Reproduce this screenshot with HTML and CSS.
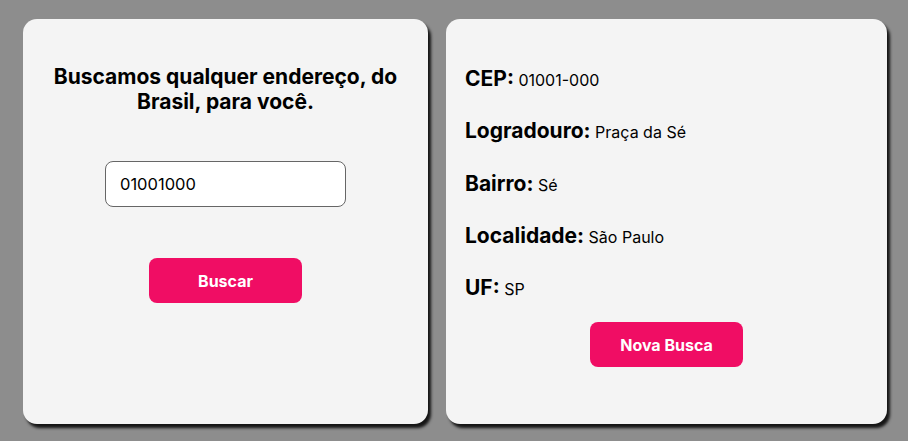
FILE: index.html
```html
<!DOCTYPE html>
<html lang="pt-BR">
<head>
<meta charset="utf-8">
<title>Busca CEP</title>
<link rel="stylesheet" href="styles.css">
</head>
<body>
<main class="page">
  <section class="card card-search">
    <h1 class="title">Buscamos qualquer endereço, do Brasil, para você.</h1>
    <input class="cep-input" type="text" value="01001000">
    <button class="btn btn-search">Buscar</button>
  </section>
  <section class="card card-result">
    <div class="rows">
      <p class="row"><span class="label">CEP:</span> <span class="value">01001-000</span></p>
      <p class="row"><span class="label">Logradouro:</span> <span class="value">Praça da Sé</span></p>
      <p class="row"><span class="label">Bairro:</span> <span class="value">Sé</span></p>
      <p class="row"><span class="label">Localidade:</span> <span class="value">São Paulo</span></p>
      <p class="row"><span class="label">UF:</span> <span class="value">SP</span></p>
    </div>
    <button class="btn btn-new">Nova Busca</button>
  </section>
</main>
</body>
</html>
```
FILE: styles.css
```css
* { box-sizing: border-box; }
html, body { margin: 0; padding: 0; }
body {
  background: #8d8d8d;
  font-family: Inter, "Noto Sans", sans-serif;
  color: #000;
  width: 908px;
  height: 441px;
  overflow: hidden;
}
.page {
  display: flex;
  gap: 18px;
  padding: 19px 21px 0 23px;
}
.card {
  background: #f4f4f4;
  border-radius: 14px;
  height: 405px;
  box-shadow: 3px 4px 3px rgba(0, 0, 0, 0.85);
}
.card-search {
  width: 405px;
  display: flex;
  flex-direction: column;
  align-items: center;
  padding-top: 45px;
}
.title {
  margin: 0;
  font-size: 21px;
  font-weight: 700;
  line-height: 25px;
  text-align: center;
  width: 380px;
}
.cep-input {
  margin-top: 47px;
  width: 241px;
  height: 46px;
  border: 1px solid #666;
  border-radius: 8px;
  background: #fff;
  padding: 0 14px;
  font-family: inherit;
  font-size: 16.5px;
  color: #000;
  outline: none;
}
.btn {
  width: 153px;
  height: 45px;
  border: none;
  border-radius: 8px;
  background: #f00d64;
  color: #fff;
  font-family: inherit;
  font-size: 16px;
  font-weight: 700;
}
.btn-search { margin-top: 51px; }
.card-result {
  flex: 1;
  display: flex;
  flex-direction: column;
  padding: 47px 19px 0;
}
.rows {
  display: flex;
  flex-direction: column;
  gap: 27.3px;
}
.row {
  margin: 0;
  line-height: 25px;
  height: 25px;
}
.label {
  font-size: 21px;
  font-weight: 700;
}
.value {
  font-size: 16px;
}
.btn-new {
  margin-top: 22px;
  align-self: center;
}
```
